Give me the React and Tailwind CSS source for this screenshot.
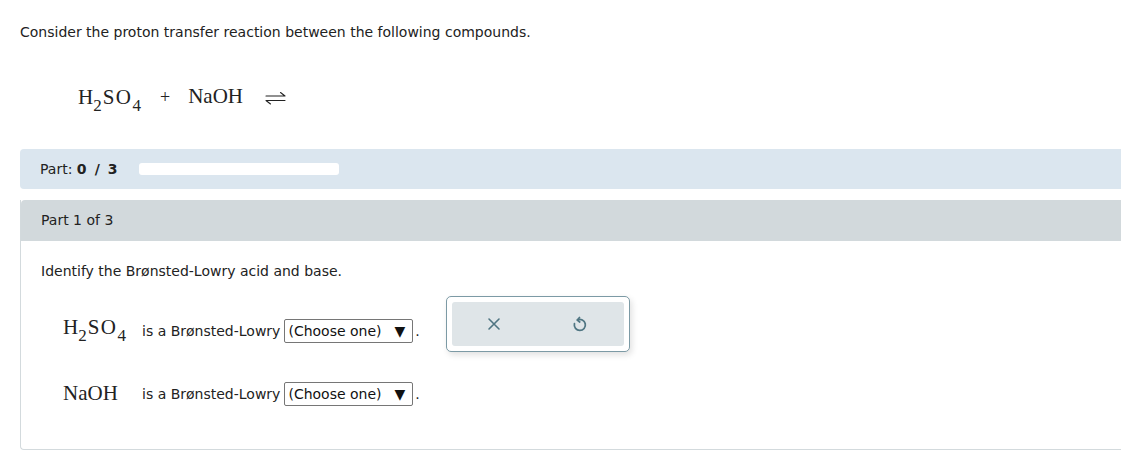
import React from 'react';

const sans = { fontFamily: '"DejaVu Sans", Verdana, sans-serif' };

const Sub = ({ children }) => (
  <span className="inline-block relative top-[7px] text-[17px] leading-none">{children}</span>
);

const H2SO4 = () => (
  <span className="font-['Liberation_Serif',serif] text-[21px] text-[#222] whitespace-nowrap leading-none">
    H<Sub>2</Sub>
    <span className="tracking-[1.5px] ml-[1px]">SO</span>
    <Sub>4</Sub>
  </span>
);

const NaOH = () => (
  <span className="font-['Liberation_Serif',serif] text-[21px] text-[#222]">NaOH</span>
);

const ChooseOne = () => (
  <span className="inline-flex items-center">
    <span className="inline-flex items-center h-[24px] px-[3px] border border-[#767676] rounded-[2px] text-[14px] text-[#111] bg-white">
      (Choose one)
      <span className="ml-[13px] mr-[4px] text-[14px] leading-none">▼</span>
    </span>
    <span className="ml-[2px] text-[14px]">.</span>
  </span>
);

const UndoIcon = () => (
  <svg width="19" height="19" viewBox="0 0 24 24" fill="none" stroke="#4f7582" strokeWidth="2.2" strokeLinecap="round" strokeLinejoin="round">
    <path d="M9.5 6.2A7 7 0 1 1 5.6 11" />
    <path d="M12 3.2 9.2 6.3 12.3 8.8" />
  </svg>
);

const Equilibrium = () => (
  <svg width="21" height="14" viewBox="0 0 21 14" fill="none" stroke="#222" strokeWidth="1.1" strokeLinecap="round">
    <path d="M1 5h19M20 5 15.5 1.5" />
    <path d="M1 9.5h19M1 9.5 5.5 13" />
  </svg>
);

const App = () => {
  return (
    <div className="w-[1121px] h-[453px] bg-white text-[#222] overflow-hidden" style={sans}>
      <div className="pl-[20px] pt-[22px] text-[14px]">
        Consider the proton transfer reaction between the following compounds.
      </div>

      <div className="flex items-center pl-[78px] pt-[33px] h-[75px]">
        <H2SO4 />
        <span className="ml-[19px] font-['Liberation_Serif',serif] text-[18px]">+</span>
        <span className="ml-[18px]"><NaOH /></span>
        <span className="ml-[22px] mt-[2px]"><Equilibrium /></span>
      </div>

      <div className="mt-[31px] ml-[20px] h-[40px] bg-[#dbe6ef] rounded-l-[4px] flex items-center pl-[20px] text-[14px]">
        <span>Part:&nbsp;<b className="tracking-[1.6px]">0 / 3</b></span>
        <div className="ml-[20px] w-[200px] h-[12px] bg-white rounded-[3px]" />
      </div>

      <div className="mt-[11px] ml-[20px] h-[250px] border-l border-b border-[#d3dadd] rounded-bl-[4px] flex flex-col">
        <div className="h-[41px] bg-[#d2d9dc] rounded-tl-[4px] flex items-center pl-[20px] text-[14px]">
          Part 1 of 3
        </div>
        <div className="pl-[20px] pt-[20px] text-[14px]">
          Identify the Brønsted-Lowry acid and base.
        </div>
        <div className="flex items-start mt-[14px]">
          <div className="flex flex-col pl-[42px]">
            <div className="flex items-center h-[26px] mt-[22px]">
              <span className="w-[79px] -mt-[4px]"><H2SO4 /></span>
              <span className="text-[14px] mr-[4px]">is a Brønsted-Lowry</span>
              <ChooseOne />
            </div>
            <div className="flex items-center h-[26px] mt-[37px]">
              <span className="w-[79px]"><NaOH /></span>
              <span className="text-[14px] mr-[4px]">is a Brønsted-Lowry</span>
              <ChooseOne />
            </div>
          </div>
          <div className="ml-[26px] w-[184px] h-[56px] border border-[#7c9aa5] rounded-[5px] bg-white p-[5px] shadow-[2px_3px_6px_rgba(0,0,0,0.12)]">
            <div className="h-full bg-[#dfe5e8] rounded-[3px] flex items-center justify-around">
              <svg width="14" height="14" viewBox="0 0 14 14" stroke="#4f7582" strokeWidth="1.6" strokeLinecap="round">
                <path d="M2 2 12 12M12 2 2 12" />
              </svg>
              <UndoIcon />
            </div>
          </div>
        </div>
      </div>
    </div>
  );
};

export default App;
